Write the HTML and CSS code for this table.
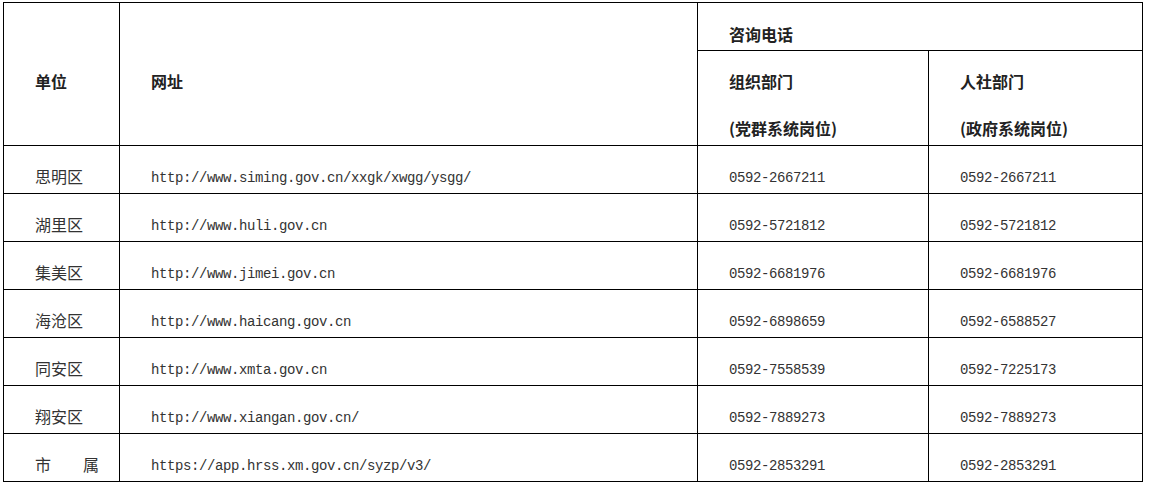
FILE: index.html
```html
<!DOCTYPE html>
<html lang="zh-CN">
<head>
<meta charset="utf-8">
<title>咨询电话</title>
<link rel="stylesheet" href="styles.css">
</head>
<body>
<table class="grid">
  <colgroup>
    <col class="c1"><col class="c2"><col class="c3"><col class="c4">
  </colgroup>
  <thead>
    <tr>
      <th rowspan="2" class="span">单位</th>
      <th rowspan="2" class="span">网址</th>
      <th colspan="2" class="top">咨询电话</th>
    </tr>
    <tr>
      <th class="sub"><div>组织部门</div><div class="second">(党群系统岗位)</div></th>
      <th class="sub"><div>人社部门</div><div class="second">(政府系统岗位)</div></th>
    </tr>
  </thead>
  <tbody>
    <tr><td class="name">思明区</td><td class="mono">http://www.siming.gov.cn/xxgk/xwgg/ysgg/</td><td class="mono">0592-2667211</td><td class="mono">0592-2667211</td></tr>
    <tr><td class="name">湖里区</td><td class="mono">http://www.huli.gov.cn</td><td class="mono">0592-5721812</td><td class="mono">0592-5721812</td></tr>
    <tr><td class="name">集美区</td><td class="mono">http://www.jimei.gov.cn</td><td class="mono">0592-6681976</td><td class="mono">0592-6681976</td></tr>
    <tr><td class="name">海沧区</td><td class="mono">http://www.haicang.gov.cn</td><td class="mono">0592-6898659</td><td class="mono">0592-6588527</td></tr>
    <tr><td class="name">同安区</td><td class="mono">http://www.xmta.gov.cn</td><td class="mono">0592-7558539</td><td class="mono">0592-7225173</td></tr>
    <tr><td class="name">翔安区</td><td class="mono">http://www.xiangan.gov.cn/</td><td class="mono">0592-7889273</td><td class="mono">0592-7889273</td></tr>
    <tr><td class="name">市　　属</td><td class="mono">https://app.hrss.xm.gov.cn/syzp/v3/</td><td class="mono">0592-2853291</td><td class="mono">0592-2853291</td></tr>
  </tbody>
</table>
</body>
</html>
```
FILE: styles.css
```css
html, body {
  margin: 0;
  padding: 0;
  background: #ffffff;
}
body {
  padding: 2px 0 0 3px;
  font-family: "Noto Sans CJK SC", "Liberation Sans", sans-serif;
  font-size: 16px;
  color: #333333;
}
.grid {
  table-layout: fixed;
  width: 1140px;
  border-collapse: separate;
  border-spacing: 0;
  border-top: 1px solid #000;
  border-left: 1px solid #000;
}
.c1 { width: 116px; }
.c2 { width: 578px; }
.c3 { width: 231px; }
.c4 { width: 214px; }
th, td {
  border-right: 1px solid #000;
  border-bottom: 1px solid #000;
  padding: 0 0 0 31px;
  text-align: left;
  line-height: 20px;
  white-space: nowrap;
  overflow: hidden;
}
th {
  font-weight: 700;
  color: #222222;
}
th.span {
  vertical-align: top;
  padding-top: 68px;
}
th.top {
  vertical-align: top;
  padding-top: 21px;
  padding-bottom: 6px;
}
th.sub {
  vertical-align: top;
  padding-top: 20px;
  padding-bottom: 7px;
}
th.sub .second {
  margin-top: 27px;
}
td {
  vertical-align: top;
  padding-top: 22px;
  padding-bottom: 5px;
  font-weight: 400;
}
td.name {
  padding-top: 20px;
  padding-bottom: 7px;
}
td.mono {
  font-family: "Liberation Mono", "DejaVu Sans Mono", monospace;
  font-size: 14px;
  letter-spacing: -0.4px;
}
```
